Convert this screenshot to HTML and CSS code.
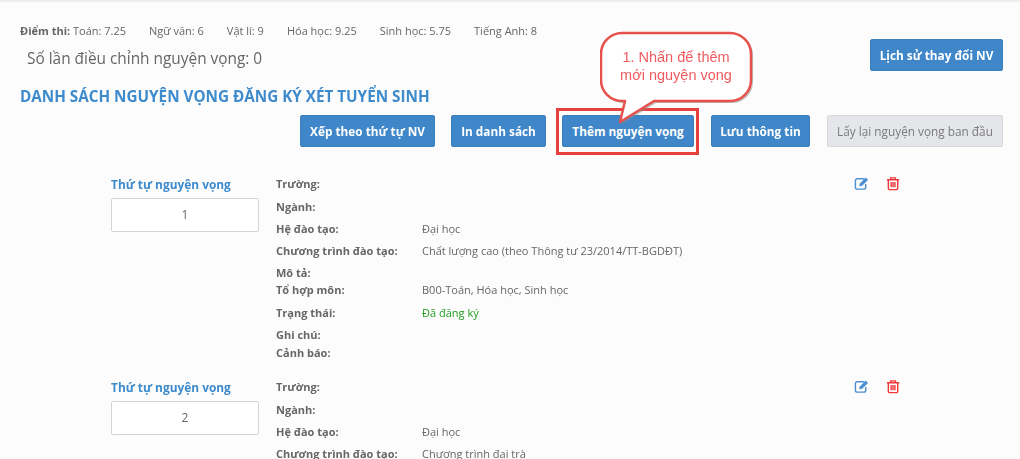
FILE: index.html
```html
<!doctype html>
<html lang="vi">
  <head>
    <meta charset="UTF-8" />
    <meta name="viewport" content="width=device-width, initial-scale=1.0" />
    <title>Danh sách nguyện vọng</title>
    <link rel="stylesheet" href="styles.css">
  </head>
  <body>
    <div class="page">
      <div class="top">
        <div>
          <div class="scores">
            <span><strong>Điểm thi:</strong> Toán: 7.25</span>
            <span>Ngữ văn: 6</span>
            <span>Vật lí: 9</span>
            <span>Hóa học: 9.25</span>
            <span>Sinh học: 5.75</span>
            <span>Tiếng Anh: 8</span>
          </div>
          <div class="count">Số lần điều chỉnh nguyện vọng: 0</div>
        </div>
        <button class="btn">Lịch sử thay đổi NV</button>
      </div>
      <h1 class="title">DANH SÁCH NGUYỆN VỌNG ĐĂNG KÝ XÉT TUYỂN SINH</h1>
      <div class="actions">
        <button class="btn btn-sort">Xếp theo thứ tự NV</button>
        <button class="btn btn-print">In danh sách</button>
        <button class="btn btn-add">
          Thêm nguyện vọng
          <span class="callout">
            <svg class="callout-shape" width="166" height="100" viewBox="0 0 166 100">
              <path class="callout-shadow" d="M24 3H132a21 21 0 0 1 21 21V51a21 21 0 0 1-21 21H56L22 93 27 72H24a21 21 0 0 1-21-21V24A21 21 0 0 1 24 3Z" />
              <path class="callout-body" d="M22 2H130a21 21 0 0 1 21 21V49a21 21 0 0 1-21 21H54L20 91 25 70H22a21 21 0 0 1-21-21V23A21 21 0 0 1 22 2Z" />
            </svg>
            <span class="callout-text">1. Nhấn để thêm<br>mới nguyện vọng</span>
          </span>
        </button>
        <button class="btn btn-save">Lưu thông tin</button>
        <button class="btn btn-muted">Lấy lại nguyện vọng ban đầu</button>
      </div>

      <div class="item">
        <div class="order">
          <div class="order-label">Thứ tự nguyện vọng</div>
          <div class="order-box">1</div>
        </div>
        <div class="details">
          <div class="row row-wide"><b>Trường:</b></div>
          <div class="row"><b>Ngành:</b></div>
          <div class="row"><b>Hệ đào tạo:</b><span>Đại học</span></div>
          <div class="row"><b>Chương trình đào tạo:</b><span>Chất lượng cao (theo Thông tư 23/2014/TT-BGDĐT)</span></div>
          <div class="row row-short"><b>Mô tả:</b></div>
          <div class="row row-wide"><b>Tổ hợp môn:</b><span>B00-Toán, Hóa học, Sinh học</span></div>
          <div class="row"><b>Trạng thái:</b><span class="ok">Đã đăng ký</span></div>
          <div class="row row-tight"><b>Ghi chú:</b></div>
          <div class="row"><b>Cảnh báo:</b></div>
        </div>
        <div class="tools">
          <svg class="icon-edit" width="17" height="15" viewBox="0 0 17 15">
            <path d="M11 2.500H3.500A2 2 0 0 0 1.500 4.500V11.500A2 2 0 0 0 3.500 13.500H10.500A2 2 0 0 0 12.500 11.500V8" />
            <path class="pen" d="M5.500 10.500L6.200 7.500 12.500 1.200 15 3.700 8.700 10Z" />
          </svg>
          <svg class="icon-trash" width="15" height="15" viewBox="0 0 15 15">
            <path d="M1 3.500H14M5 3.200V1.500H10V3.200M2.500 3.500V12.500A1.500 1.500 0 0 0 4 14H11A1.500 1.500 0 0 0 12.500 12.500V3.500M5.500 6V11.500M7.500 6V11.500M9.500 6V11.500" />
          </svg>
        </div>
      </div>

      <div class="item">
        <div class="order">
          <div class="order-label">Thứ tự nguyện vọng</div>
          <div class="order-box">2</div>
        </div>
        <div class="details">
          <div class="row row-wide"><b>Trường:</b></div>
          <div class="row"><b>Ngành:</b></div>
          <div class="row"><b>Hệ đào tạo:</b><span>Đại học</span></div>
          <div class="row"><b>Chương trình đào tạo:</b><span>Chương trình đại trà</span></div>
        </div>
        <div class="tools">
          <svg class="icon-edit" width="17" height="15" viewBox="0 0 17 15">
            <path d="M11 2.500H3.500A2 2 0 0 0 1.500 4.500V11.500A2 2 0 0 0 3.500 13.500H10.500A2 2 0 0 0 12.500 11.500V8" />
            <path class="pen" d="M5.500 10.500L6.200 7.500 12.500 1.200 15 3.700 8.700 10Z" />
          </svg>
          <svg class="icon-trash" width="15" height="15" viewBox="0 0 15 15">
            <path d="M1 3.500H14M5 3.200V1.500H10V3.200M2.500 3.500V12.500A1.500 1.500 0 0 0 4 14H11A1.500 1.500 0 0 0 12.500 12.500V3.500M5.500 6V11.500M7.500 6V11.500M9.500 6V11.500" />
          </svg>
        </div>
      </div>
    </div>
  </body>
</html>
```

FILE: styles.css
```css
html,
body {
  margin: 0;
  height: 100%;
  overflow: hidden;
  background-color: #fcfcfc;
}
.page {
  height: 459px;
  box-sizing: border-box;
  border-top: 2px solid #eeeeee;
  padding: 21px 17px 0 20px;
  font-family: "Open Sans", sans-serif;
  font-size: 11px;
  color: #666;
  overflow: hidden;
  filter: blur(0.5px);
}
.top {
  display: flex;
  justify-content: space-between;
  align-items: flex-start;
}
.scores {
  display: flex;
  gap: 23px;
  line-height: 16px;
}
.scores strong {
  font-weight: 700;
}
.count {
  margin: 9px 0 0 7px;
  font-size: 15.400px;
  line-height: 22px;
}
.top .btn {
  margin-top: 16px;
}
.title {
  margin: 14px 0 0;
  font-size: 15.250px;
  line-height: 22px;
  font-weight: 700;
  color: #3d8bcd;
}
.actions {
  display: flex;
  justify-content: flex-end;
  gap: 16px;
  margin-top: 8px;
}
.btn {
  height: 32px;
  padding: 0;
  border: 1px solid #3a80bd;
  border-radius: 2px;
  background-color: #3f87c9;
  color: #fff;
  font-family: "Open Sans", sans-serif;
  font-size: 11.800px;
  font-weight: 700;
  width: 133px;
}
.btn-sort {
  width: 135px;
}
.btn-print {
  width: 95px;
}
.btn-add {
  position: relative;
  width: 132px;
}
.btn-add::after {
  content: "";
  position: absolute;
  inset: -8px -6px -9px -7px;
  border: 3px solid #e8403c;
}
.btn-save {
  width: 99px;
  margin-left: 1px;
  margin-right: 1px;
}
.btn-muted {
  width: 176px;
  border-color: #d5d8db;
  background-color: #e4e6e9;
  color: #7a7a7a;
  font-weight: 400;
}
.callout {
  position: absolute;
  left: 37px;
  top: -85px;
  width: 166px;
  height: 100px;
  z-index: 2;
}
.callout-shape {
  display: block;
}
.callout-shadow {
  fill: #8a8a8a;
  opacity: 0.55;
}
.callout-body {
  fill: #fff;
  stroke: #e8504c;
  stroke-width: 2.500;
  stroke-linejoin: round;
}
.callout-text {
  position: absolute;
  left: 0;
  top: 17px;
  width: 152px;
  text-align: center;
  font-family: "Liberation Sans", Arial, sans-serif;
  font-size: 14.500px;
  font-weight: 400;
  line-height: 18px;
  color: #ef5a5e;
}
.item {
  display: grid;
  grid-template-columns: 148px 561px 46px;
  column-gap: 17px;
  margin-left: 91px;
  padding-bottom: 12px;
}
.actions + .item {
  margin-top: 26px;
}
.order-label {
  font-size: 11.900px;
  font-weight: 700;
  color: #3d8bcd;
  line-height: 22px;
}
.order-box {
  height: 32px;
  margin-top: 3px;
  border: 1px solid #d4d4d4;
  border-radius: 2px;
  background-color: #fff;
  text-align: center;
  line-height: 32px;
  font-size: 12px;
}
.row {
  display: grid;
  grid-template-columns: 146px 1fr;
  height: 22px;
  line-height: 22px;
}
.row-wide {
  height: 23px;
}
.row-short {
  height: 17px;
}
.row-tight {
  height: 18px;
}
.row b {
  font-weight: 700;
  color: #666;
}
.ok {
  color: #1f9a1f;
}
.tools {
  display: flex;
  gap: 16px;
  padding-top: 3px;
  align-items: flex-start;
}
.tools svg {
  fill: none;
  stroke-width: 1.500;
}
.icon-edit {
  stroke: #4a90d2;
}
.icon-edit .pen {
  fill: #4a90d2;
  stroke: none;
}
.icon-trash {
  stroke: #f0383c;
}
```
